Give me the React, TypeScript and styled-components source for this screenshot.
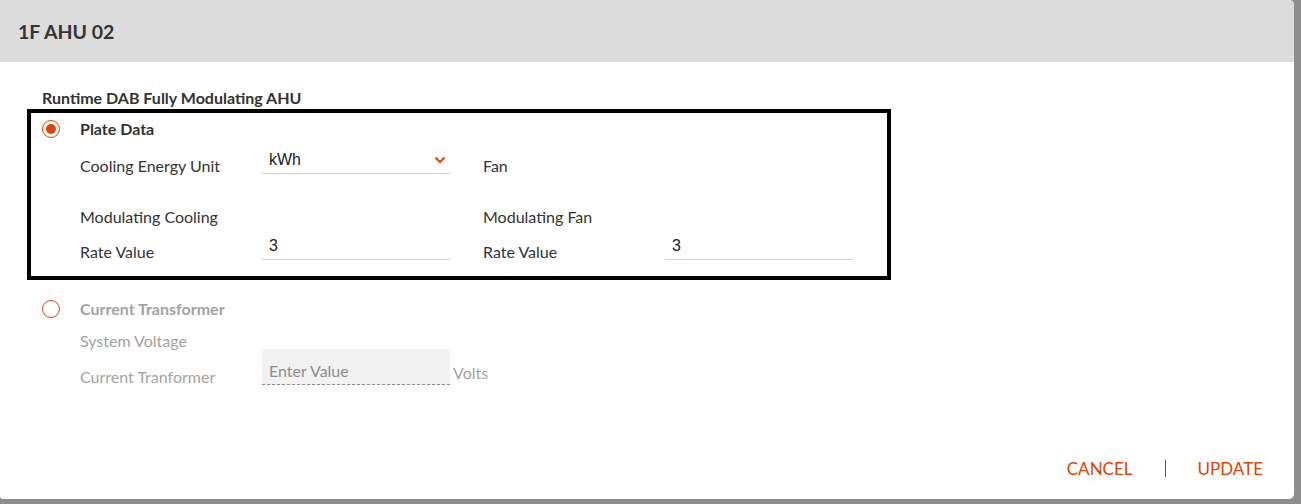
import React, { useState } from "react";
import styled, { createGlobalStyle } from "styled-components";

const GlobalStyle = createGlobalStyle`
    html, body {
        margin: 0;
        padding: 0;
        background: #8d8d8d;
        font-family: Lato, "Open Sans", sans-serif;
    }
    * { box-sizing: border-box; }
`

const Backdrop = styled.div`
    width: 1301px;
    height: 504px;
    background: #8d8d8d;
    overflow: hidden;
`

const Dialog = styled.div`
    width: 1294px;
    height: 499px;
    background: #fff;
    border-radius: 0 5px 5px 3px;
    display: flex;
    flex-direction: column;
    overflow: hidden;
`

const Header = styled.div`
    height: 62px;
    background: #dcdcdc;
    display: flex;
    align-items: center;
    padding: 0 18px;
    font-size: 19.5px;
    font-weight: 700;
    color: #333;
`

const Body = styled.div`
    flex: 1;
    padding: 24px 0 0 42px;
`

const Subtitle = styled.div`
    font-size: 16px;
    font-weight: 700;
    color: #333;
    height: 23px;
    line-height: 23px;
`

const Highlight = styled.div`
    margin-left: -15px;
    width: 864px;
    border: 4px solid #000;
    padding: 0 0 5px 11px;
`

const Section = styled.div<{ $muted?: boolean }>`
    color: ${p => (p.$muted ? "#a3a3a3" : "#333")};
`

const Row = styled.div<{ $h: number; $mt?: number }>`
    display: flex;
    align-items: center;
    height: ${p => p.$h}px;
    margin-top: ${p => p.$mt ?? 0}px;
`

const RadioOuter = styled.span`
    width: 18px;
    height: 18px;
    border-radius: 50%;
    border: 1.5px solid #e24301;
    display: flex;
    align-items: center;
    justify-content: center;
    margin-right: 20px;
    cursor: pointer;
    flex-shrink: 0;
`

const RadioDot = styled.span`
    width: 10px;
    height: 10px;
    border-radius: 50%;
    background: #e24301;
`

const SectionTitle = styled.span`
    font-size: 16px;
    font-weight: 700;
    margin-bottom: 1px;
`

const Label = styled.span<{ $indent?: number }>`
    width: 182px;
    margin-left: ${p => p.$indent ?? 0}px;
    font-size: 16px;
    flex-shrink: 0;
`

const Field = styled.div<{ $bare?: boolean }>`
    width: 188px;
    height: 26px;
    margin-bottom: 8px;
    border-bottom: 1px solid ${p => (p.$bare ? "transparent" : "#cfcfcf")};
    display: flex;
    align-items: center;
    justify-content: space-between;
    padding: 0 4px 2px 7px;
    font-family: "Liberation Sans", Arial, sans-serif;
    font-size: 16px;
    color: #222;
    flex-shrink: 0;
`

const Gap = styled.span`
    width: 33px;
    flex-shrink: 0;
`

const Unit = styled.span`
    font-size: 16px;
    margin-left: 3px;
    margin-bottom: 8px;
`

const DisabledField = styled.div`
    width: 188px;
    height: 36px;
    margin-bottom: 18px;
    background: #f2f2f2;
    border-bottom: 1px dashed #8a8a8a;
    display: flex;
    align-items: flex-end;
    padding: 0 7px 4px;
    font-size: 16px;
    color: #8c8c8c;
    flex-shrink: 0;
`

const Footer = styled.div`
    height: 62px;
    display: flex;
    align-items: center;
    justify-content: flex-end;
    padding: 0 31px 0 0;
`

const Action = styled.button`
    background: none;
    border: none;
    padding: 0;
    font-family: Lato, sans-serif;
    font-size: 17px;
    color: #e24301;
    cursor: pointer;
`

const Divider = styled.span`
    width: 1px;
    height: 17px;
    background: #555;
    margin: 0 32px 0 32px;
`

function Chevron() {
    return (
        <svg width="12" height="8" viewBox="0 0 12 8">
            <path d="M1.5 1.5 L6 6 L10.5 1.5" fill="none" stroke="#e24301" strokeWidth="2" />
        </svg>
    )
}

export default function App() {
    const [mode, setMode] = useState<"plate" | "ct">("plate")

    return (
        <>
            <GlobalStyle />
            <Backdrop>
                <Dialog>
                    <Header>1F AHU 02</Header>
                    <Body>
                        <Subtitle>Runtime DAB Fully Modulating AHU</Subtitle>
                        <Highlight>
                            <Section>
                                <Row $h={32}>
                                    <RadioOuter onClick={() => setMode("plate")}>
                                        {mode === "plate" && <RadioDot />}
                                    </RadioOuter>
                                    <SectionTitle>Plate Data</SectionTitle>
                                </Row>
                                <Row $h={36} $mt={2}>
                                    <Label $indent={38}>Cooling Energy Unit</Label>
                                    <Field>kWh <Chevron /></Field>
                                    <Gap />
                                    <Label>Fan</Label>
                                </Row>
                                <Row $h={30} $mt={18}>
                                    <Label $indent={38}>Modulating Cooling</Label>
                                    <Field $bare />
                                    <Gap />
                                    <Label>Modulating Fan</Label>
                                </Row>
                                <Row $h={40}>
                                    <Label $indent={38}>Rate Value</Label>
                                    <Field>3</Field>
                                    <Gap />
                                    <Label>Rate Value</Label>
                                    <Field>3</Field>
                                </Row>
                            </Section>
                        </Highlight>
                        <Section $muted>
                            <Row $h={34} $mt={12}>
                                <RadioOuter onClick={() => setMode("ct")}>
                                    {mode === "ct" && <RadioDot />}
                                </RadioOuter>
                                <SectionTitle>Current Transformer</SectionTitle>
                            </Row>
                            <Row $h={29}>
                                <Label $indent={38}>System Voltage</Label>
                            </Row>
                            <Row $h={42}>
                                <Label $indent={38}>Current Tranformer</Label>
                                <DisabledField>Enter Value</DisabledField>
                                <Unit>Volts</Unit>
                            </Row>
                        </Section>
                    </Body>
                    <Footer>
                        <Action>CANCEL</Action>
                        <Divider />
                        <Action>UPDATE</Action>
                    </Footer>
                </Dialog>
            </Backdrop>
        </>
    )
}
